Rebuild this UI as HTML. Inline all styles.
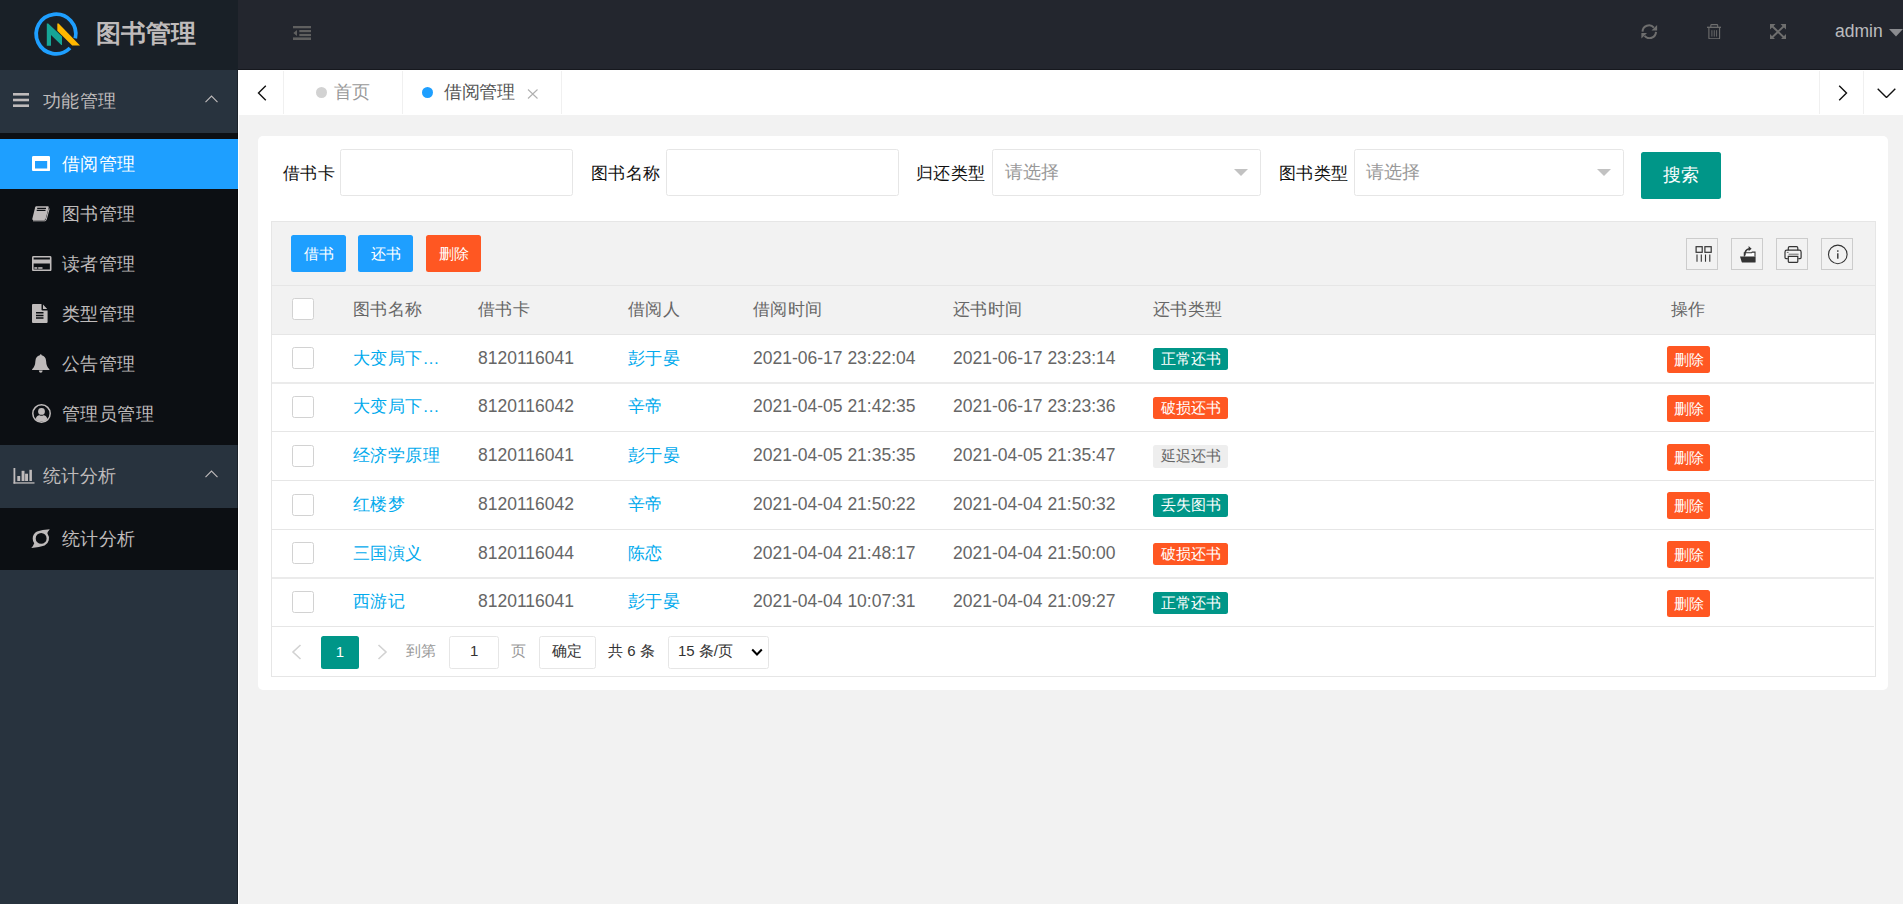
<!DOCTYPE html>
<html>
<head>
<meta charset="utf-8">
<style>
*{box-sizing:border-box;margin:0;padding:0}
html,body{width:1903px;height:904px;overflow:hidden}
body{position:relative;background:#f2f2f2;font-family:"Liberation Sans",sans-serif;color:#333}
.abs{position:absolute}
svg{display:block}
/* header */
#logo{left:0;top:0;width:238px;height:70px;background:#192027}
#logo .t{left:96px;top:17px;font-size:25px;font-weight:bold;color:#bfbbbb;line-height:32px;white-space:nowrap}
#hdr{left:238px;top:0;width:1665px;height:70px;background:#23262e;border-bottom:1px solid #16181e}
#hdr .admin{left:1597px;top:19px;font-size:17.5px;color:rgba(255,255,255,.7);line-height:24px}
/* sidebar */
#side{left:0;top:70px;width:238px;height:834px;background:#28333e}
.grp{position:absolute;left:0;width:238px;height:63px;background:#28333e;color:#bfbbbb;font-size:18px;letter-spacing:.45px}
.grp .t{position:absolute;left:43px;top:19px;line-height:24px;white-space:nowrap}
.child{position:absolute;left:0;width:238px;background:#0c0f13}
.item{position:absolute;left:0;width:238px;height:50px;color:#bfbbbb;font-size:18px;letter-spacing:.45px}
.item .t{position:absolute;left:62px;top:13px;line-height:24px;white-space:nowrap}
.item.on{background:#1e9fff;color:#fff}
.item .ic{position:absolute;left:32px}
#wline{left:238px;top:70px;width:1px;height:834px;background:#fff}
/* tabs */
#tabs{left:239px;top:70px;width:1664px;height:45px;background:#fff}
.vsep{position:absolute;top:1px;width:1px;height:43px;background:#f0f0f0}
.tab{position:absolute;top:0;height:45px;font-size:18px;letter-spacing:-.35px;line-height:44px;white-space:nowrap}
.dot{position:absolute;width:11px;height:11px;border-radius:50%}
/* card */
#card{left:258px;top:136px;width:1630px;height:554px;background:#fff;border-radius:5px}
.lbl{position:absolute;top:161.5px;font-size:17px;letter-spacing:.4px;line-height:24px;color:#111;white-space:nowrap}
.inp{position:absolute;top:149px;height:47px;background:#fff;border:1px solid #e6e6e6;border-radius:2.5px}
.ph{position:absolute;font-size:17.5px;color:#999;line-height:24px;white-space:nowrap}
.tri{position:absolute;width:0;height:0;border-left:7.5px solid transparent;border-right:7.5px solid transparent;border-top:7.5px solid #c2c2c2}
.btn{position:absolute;color:#fff;text-align:center;white-space:nowrap}
/* table */
#tbl{left:271px;top:221px;width:1605px;height:456px;border:1px solid #e6e6e6;background:#fff}
.tool{position:absolute;left:0;top:0;width:1603px;height:64px;background:#f2f2f2;border-bottom:1px solid #e6e6e6}
.thead{position:absolute;left:0;top:64px;width:1603px;height:49px;background:#f2f2f2;border-bottom:1px solid #e6e6e6}
.row{position:absolute;left:0;width:1603px;border-bottom:1px solid #e6e6e6}
.cell{position:absolute;font-size:17.5px;line-height:24px;color:#666;white-space:nowrap}
.link{color:#01aaed}
.cb{position:absolute;left:21px;width:22px;height:22px;border:1px solid #d2d2d2;border-radius:2.5px;background:#fff}
.badge{position:absolute;left:881px;height:22.5px;padding:0 7.5px;font-size:15px;line-height:22.5px;color:#fff;border-radius:2.5px;white-space:nowrap}
.del{position:absolute;left:1395px;width:43px;height:27px;background:#ff5722;color:#fff;font-size:15px;line-height:27px;text-align:center;border-radius:2.5px}
.tic{position:absolute;top:16px;width:32px;height:32px;border:1px solid #ccc}
</style>
</head>
<body>
<!-- logo -->
<div id="logo" class="abs">
  <svg class="abs" style="left:30px;top:8px" width="52" height="52" viewBox="0 0 52 52">
    <path d="M45.3 30.4 A19.8 19.8 0 1 0 40 40" fill="none" stroke="#1e9fff" stroke-width="3.8"/>
    <path d="M16.8 15.4 L18.2 15.4 L32 28.5 L32 37 L31.3 37 L21 26.9 L21 37.7 L16.8 37.7 Z" fill="#16a596"/>
    <path d="M27.3 15.4 L28.6 15.4 L50 37.4 L42.2 37.4 L27.3 22.8 Z" fill="#ffb800"/>
  </svg>
  <div class="abs t">图书管理</div>
</div>
<!-- header -->
<div id="hdr" class="abs">
  <div class="abs admin">admin</div>
</div>
<!-- sidebar -->
<div id="side" class="abs">
  <div class="grp" style="top:0">
    <div class="t">功能管理</div>
  </div>
  <div class="child" style="top:63px;height:312px">
    <div class="item on" style="top:6px"><div class="t">借阅管理</div></div>
    <div class="item" style="top:56px"><div class="t">图书管理</div></div>
    <div class="item" style="top:106px"><div class="t">读者管理</div></div>
    <div class="item" style="top:156px"><div class="t">类型管理</div></div>
    <div class="item" style="top:206px"><div class="t">公告管理</div></div>
    <div class="item" style="top:256px"><div class="t">管理员管理</div></div>
  </div>
  <div class="grp" style="top:375px">
    <div class="t">统计分析</div>
  </div>
  <div class="child" style="top:438px;height:62px">
    <div class="item" style="top:6px"><div class="t">统计分析</div></div>
  </div>
</div>
<div id="wline" class="abs"></div>
<div class="abs" style="left:237px;top:70px;width:1px;height:69px;background:rgba(0,0,0,.3)"></div>
<div class="abs" style="left:237px;top:189px;width:1px;height:715px;background:rgba(0,0,0,.3)"></div>
<!-- tabs -->
<div id="tabs" class="abs">
  <div class="vsep" style="left:44px"></div>
  <div class="vsep" style="left:163px"></div>
  <div class="vsep" style="left:322px"></div>
  <div class="vsep" style="left:1580px"></div>
  <div class="vsep" style="left:1624px"></div>
  <div class="dot" style="left:77px;top:17px;background:#d2d2d2"></div>
  <div class="tab" style="left:95px;color:#999">首页</div>
  <div class="dot" style="left:183px;top:17px;background:#1e9fff"></div>
  <div class="tab" style="left:205px;color:#555">借阅管理</div>
</div>

<!-- header icons -->
<svg class="abs" style="left:293px;top:25px" width="18" height="15" viewBox="0 0 18 15" fill="#5f5f5f">
  <rect x="0" y="1" width="18" height="2.3"/><rect x="6.3" y="5" width="11.7" height="2.2"/><rect x="6.3" y="8.9" width="11.7" height="2.2"/><rect x="0" y="12.4" width="18" height="2.6"/>
  <path d="M4 4.9 L4 11.1 L0.3 8 Z"/>
</svg>
<svg class="abs" style="left:1641px;top:23.5px" width="16.5" height="15.5" viewBox="0 0 16.5 15.5" fill="#6e6e6e">
  <path d="M1.5 7.6 A6.5 6.5 0 0 1 12.9 3.6" fill="none" stroke="#6e6e6e" stroke-width="2"/>
  <path d="M16.1 1 L16.1 6.6 L10.5 6.6 Z"/>
  <path d="M15 7.9 A6.5 6.5 0 0 1 3.6 11.9" fill="none" stroke="#6e6e6e" stroke-width="2"/>
  <path d="M0.4 14.5 L0.4 8.9 L6 8.9 Z"/>
</svg>
<svg class="abs" style="left:1706.5px;top:23.5px" width="14.5" height="15.5" viewBox="0 0 14.5 15.5" fill="none" stroke="#6e6e6e">
  <path d="M3.8 3.2 V1.4 Q3.8 0.6 4.6 0.6 H9.9 Q10.7 0.6 10.7 1.4 V3.2" stroke-width="1.1"/>
  <path d="M0 3.3 H14.5" stroke-width="1.3"/>
  <path d="M1.9 3.5 V13.9 Q1.9 14.9 2.9 14.9 H11.6 Q12.6 14.9 12.6 13.9 V3.5" stroke-width="1.1"/>
  <path d="M4.9 6.2 V12.6 M7.25 6.2 V12.6 M9.6 6.2 V12.6" stroke-width="0.9"/>
</svg>
<svg class="abs" style="left:1770px;top:23.5px" width="16" height="15.5" viewBox="0 0 16 15.5" fill="#6e6e6e">
  <path d="M0 0 H5.5 L0 5.5 Z M16 0 V5.5 L10.5 0 Z M0 15.5 V10 L5.5 15.5 Z M16 15.5 H10.5 L16 10 Z"/>
  <path d="M2 2 L14 13.5 M14 2 L2 13.5" stroke="#6e6e6e" stroke-width="1.9"/>
</svg>
<svg class="abs" style="left:1889px;top:29px" width="14" height="8" viewBox="0 0 14 8"><path d="M0 0 H14 L7 7.5 Z" fill="#8a8b8f"/></svg>

<!-- sidebar icons -->
<svg class="abs" style="left:13px;top:93px" width="16" height="14" viewBox="0 0 16 14" fill="#bfbbbb"><rect y="0" width="16" height="2.6"/><rect y="5.7" width="16" height="2.6"/><rect y="11.4" width="16" height="2.6"/></svg>
<svg class="abs" style="left:205px;top:470px" width="13" height="8" viewBox="0 0 13 8"><path d="M0.5 7.2 L6.5 1 L12.5 7.2" fill="none" stroke="#bfbbbb" stroke-width="1.1"/></svg>
<svg class="abs" style="left:205px;top:95px" width="13" height="8" viewBox="0 0 13 8"><path d="M0.5 7.2 L6.5 1 L12.5 7.2" fill="none" stroke="#bfbbbb" stroke-width="1.1"/></svg>
<svg class="abs" style="left:32px;top:156px" width="18.2" height="15.2" viewBox="0 0 18.2 15.2"><path fill="#fff" fill-rule="evenodd" d="M1.5 0 H16.7 Q18.2 0 18.2 1.5 V13.7 Q18.2 15.2 16.7 15.2 H1.5 Q0 15.2 0 13.7 V1.5 Q0 0 1.5 0 Z M3 5 V12.6 H15.2 V5 Z"/></svg>
<svg class="abs" style="left:32px;top:206px" width="17.5" height="15.5" viewBox="0 0 17.5 15.5"><path fill="#bfbbbb" d="M4.2 0.3 H15.8 Q17 0.3 16.7 1.5 L13.6 13 Q13.3 14 12.2 14 H1.2 Q0 14 0.3 12.8 L3.2 1.3 Q3.5 0.3 4.2 0.3 Z"/><path d="M5.2 2.3 H14 M4.7 4.4 H13.5" stroke="#0c0f13" stroke-width="1.2"/><path d="M1 14.8 H12.8 Q13.9 14.8 14.2 13.8 L17.2 2.6" fill="none" stroke="#bfbbbb" stroke-width="1"/></svg>
<svg class="abs" style="left:32px;top:256px" width="19.5" height="15.2" viewBox="0 0 19.5 15.2"><path fill="#bfbbbb" fill-rule="evenodd" d="M1.5 0 H18 Q19.5 0 19.5 1.5 V13.7 Q19.5 15.2 18 15.2 H1.5 Q0 15.2 0 13.7 V1.5 Q0 0 1.5 0 Z M1.6 1.6 V3.6 H17.9 V1.6 Z M1.6 7.6 V13.6 H17.9 V7.6 Z"/><rect x="2.3" y="11.2" width="3" height="1.6" fill="#bfbbbb"/><rect x="6.2" y="11.2" width="4.3" height="1.6" fill="#bfbbbb"/></svg>
<svg class="abs" style="left:32px;top:304px" width="15.6" height="19" viewBox="0 0 15.6 19"><path fill="#bfbbbb" d="M1 0 H9.5 V5.5 Q9.5 6.5 10.5 6.5 H15.6 V18 Q15.6 19 14.6 19 H1 Q0 19 0 18 V1 Q0 0 1 0 Z M11 0.5 L15.2 5 H11 Z"/><path d="M4 8.8 H11.5 M4 11.5 H11.5 M4 14 H11.5" stroke="#0c0f13" stroke-width="1.5"/></svg>
<svg class="abs" style="left:32px;top:354px" width="17.5" height="19" viewBox="0 0 17.5 19"><path fill="#bfbbbb" d="M8.75 0.3 Q9.6 0.3 9.7 1.3 Q13.8 2.2 14.1 7 Q14.3 12.5 17.4 15.2 V15.9 H0.1 V15.2 Q3.2 12.5 3.4 7 Q3.7 2.2 7.8 1.3 Q7.9 0.3 8.75 0.3 Z M6.8 16.6 H10.7 Q10.4 18.8 8.75 18.8 Q7.1 18.8 6.8 16.6 Z"/></svg>
<svg class="abs" style="left:31.5px;top:403.7px" width="19" height="19" viewBox="0 0 19 19"><circle cx="9.5" cy="9.5" r="8.7" fill="none" stroke="#bfbbbb" stroke-width="1.5"/><circle cx="9.5" cy="7.4" r="3.4" fill="#bfbbbb"/><path fill="#bfbbbb" d="M3.6 15.2 Q4.5 11.4 7.6 11.2 Q9.5 12.2 11.4 11.2 Q14.5 11.4 15.4 15.2 Q12.9 17.6 9.5 17.6 Q6.1 17.6 3.6 15.2 Z"/></svg>
<svg class="abs" style="left:12.5px;top:467.5px" width="22" height="16" viewBox="0 0 22 16" fill="#bfbbbb"><rect x="0.5" y="0" width="1.8" height="15.6"/><rect x="0.5" y="14.3" width="21" height="1.3"/><rect x="4.3" y="8" width="2.9" height="5"/><rect x="8.6" y="2.8" width="2.9" height="10.2"/><rect x="12.1" y="5.7" width="2.9" height="7.3"/><rect x="16.4" y="1.8" width="2.5" height="11.2"/></svg>
<svg class="abs" style="left:28px;top:524px" width="26" height="28" viewBox="0 0 26 28"><path fill="#bfbbbb" fill-rule="evenodd" d="M4.7 14.5 A8.1 8.1 0 0 1 9 7.4 Q14 5.6 21.8 5.2 Q19.6 7.5 19.4 9.6 A8.1 8.1 0 0 1 16.6 21.6 Q11.6 23.4 3.3 23.9 Q5.6 21.5 6.2 19.3 A8.1 8.1 0 0 1 4.7 14.5 Z M7.7 14.4 A5.45 5.45 0 1 0 18.6 14.4 A5.45 5.45 0 1 0 7.7 14.4 Z"/></svg>

<!-- tab icons -->
<svg class="abs" style="left:256.5px;top:84.5px" width="10" height="16" viewBox="0 0 10 16"><path d="M8.8 0.8 L1.5 8 L8.8 15.2" fill="none" stroke="#111" stroke-width="1.4"/></svg>
<svg class="abs" style="left:1837.5px;top:84.5px" width="10" height="16" viewBox="0 0 10 16"><path d="M1.2 0.8 L8.5 8 L1.2 15.2" fill="none" stroke="#111" stroke-width="1.4"/></svg>
<svg class="abs" style="left:1877px;top:87.5px" width="19" height="10.5" viewBox="0 0 19 10.5"><path d="M0.7 0.8 L9.5 9.5 L18.3 0.8" fill="none" stroke="#111" stroke-width="1.4"/></svg>
<svg class="abs" style="left:527px;top:88.5px" width="11.5" height="10" viewBox="0 0 11.5 10"><path d="M1 0.5 L10.5 9.5 M10.5 0.5 L1 9.5" fill="none" stroke="#b0b0b0" stroke-width="1.1"/></svg>
<!-- card -->
<div id="card" class="abs"></div>
<div class="lbl" style="left:283px">借书卡</div>
<div class="inp" style="left:340px;width:233px"></div>
<div class="lbl" style="left:591px">图书名称</div>
<div class="inp" style="left:666px;width:233px"></div>
<div class="lbl" style="left:916px">归还类型</div>
<div class="inp" style="left:991.5px;width:269px"></div>
<div class="ph" style="left:1005px;top:160px">请选择</div>
<div class="tri" style="left:1234px;top:169px"></div>
<div class="lbl" style="left:1279px">图书类型</div>
<div class="inp" style="left:1354px;width:270px"></div>
<div class="ph" style="left:1366px;top:160px">请选择</div>
<div class="tri" style="left:1597px;top:169px"></div>
<div class="btn" style="left:1641px;top:152px;width:80px;height:47px;background:#009688;border-radius:2.5px;font-size:17.5px;line-height:47px">搜索</div>
<!-- table -->
<div id="tbl" class="abs"></div>
<div class="abs" style="left:272px;top:222px;width:1603px;height:63px;background:#f2f2f2"></div>
<div class="abs" style="left:272px;top:285px;width:1603px;height:1px;background:#e6e6e6"></div>
<div class="abs" style="left:272px;top:286px;width:1603px;height:48px;background:#f2f2f2"></div>
<div class="abs" style="left:272px;top:334px;width:1603px;height:1px;background:#e6e6e6"></div>
<div class="btn" style="left:291px;top:235px;width:55px;height:37px;background:#1e9fff;border-radius:2.5px;font-size:15px;line-height:37px">借书</div>
<div class="btn" style="left:358px;top:235px;width:55px;height:37px;background:#1e9fff;border-radius:2.5px;font-size:15px;line-height:37px">还书</div>
<div class="btn" style="left:426px;top:235px;width:55px;height:37px;background:#ff5722;border-radius:2.5px;font-size:15px;line-height:37px">删除</div>
<div class="tic" style="left:1686px;top:238px"></div>
<div class="tic" style="left:1731px;top:238px"></div>
<div class="tic" style="left:1776px;top:238px"></div>
<div class="tic" style="left:1821px;top:238px"></div>
<svg class="abs" style="left:1686px;top:238px" width="32" height="32" viewBox="0 0 32 32" fill="none" stroke="#333">
  <rect x="10.1" y="8.7" width="6.1" height="5.6" stroke-width="1.2"/><rect x="18.9" y="8.7" width="6.3" height="5.6" stroke-width="1.2"/>
  <path d="M11 16.5 V23.8 M15.3 16.5 V23.8 M19.5 16.5 V23.8 M23.8 16.5 V23.8" stroke-width="1.1"/>
</svg>
<svg class="abs" style="left:1731px;top:238px" width="32" height="32" viewBox="0 0 32 32">
  <path d="M13.3 18.5 V14.8 H20.6 L21.2 14.1 H24 V18.5" fill="#fff" stroke="#333" stroke-width="1.1"/>
  <path fill="#333" d="M9 18.5 H24.6 V23.9 Q24.6 24.6 23.9 24.6 H11.6 Q10.9 24.6 10.7 23.9 Z"/>
  <path d="M13.8 17.6 Q13.6 11.2 18.6 10.8" fill="none" stroke="#333" stroke-width="1.6"/>
  <path fill="#333" d="M17.6 8 L20.6 10.8 L17.6 13.3 Z"/>
</svg>
<svg class="abs" style="left:1776px;top:238px" width="32" height="32" viewBox="0 0 32 32" fill="none" stroke="#333">
  <path d="M12.3 12.2 V10 Q12.3 8.7 13.6 8.7 H20.5 Q21.8 8.7 21.8 10 V12.2" stroke-width="1.2"/>
  <path d="M11.8 20.6 H10 Q9 20.6 9 19.6 V14 Q9 12.2 10.8 12.2 H23.3 Q25.1 12.2 25.1 14 V19.6 Q25.1 20.6 24.1 20.6 H22.3" stroke-width="1.2"/>
  <path d="M12.3 18.3 H21.8 V23.6 Q21.8 24.3 21.1 24.3 H13 Q12.3 24.3 12.3 23.6 Z" stroke-width="1.2"/>
  <path d="M10.8 14.4 H12.6 M12.6 16.2 H22.6" stroke-width="0.7"/>
</svg>
<svg class="abs" style="left:1821px;top:238px" width="32" height="32" viewBox="0 0 32 32">
  <circle cx="16.8" cy="16.4" r="9.3" fill="none" stroke="#333" stroke-width="1.1"/>
  <rect x="16.1" y="12.3" width="1.4" height="1.5" fill="#333"/><rect x="16.1" y="15.3" width="1.4" height="5.4" fill="#333"/>
</svg>
<div class="cb" style="left:292px;top:298px"></div>
<div class="cell" style="left:353px;top:297.5px;font-size:17px;letter-spacing:.4px">图书名称</div>
<div class="cell" style="left:478px;top:297.5px;font-size:17px;letter-spacing:.4px">借书卡</div>
<div class="cell" style="left:628px;top:297.5px;font-size:17px;letter-spacing:.4px">借阅人</div>
<div class="cell" style="left:753px;top:297.5px;font-size:17px;letter-spacing:.4px">借阅时间</div>
<div class="cell" style="left:953px;top:297.5px;font-size:17px;letter-spacing:.4px">还书时间</div>
<div class="cell" style="left:1153px;top:297.5px;font-size:17px;letter-spacing:.4px">还书类型</div>
<div class="cell" style="left:1671px;top:297.5px;font-size:17px;letter-spacing:.4px">操作</div>
<div class="cb" style="left:292px;top:347.4px"></div>
<div class="cell link" style="left:353px;top:346.5px;font-size:17px;letter-spacing:.4px">大变局下…</div>
<div class="cell" style="left:478px;top:345.5px">8120116041</div>
<div class="cell link" style="left:628px;top:346.5px;font-size:17px;letter-spacing:.4px">彭于晏</div>
<div class="cell" style="left:753px;top:345.5px">2021-06-17 23:22:04</div>
<div class="cell" style="left:953px;top:345.5px">2021-06-17 23:23:14</div>
<div class="badge" style="left:1153px;top:347.8px;background:#009688;color:#fff">正常还书</div>
<div class="del" style="left:1667px;top:346.1px">删除</div>
<div class="cb" style="left:292px;top:396.1px"></div>
<div class="cell link" style="left:353px;top:395.2px;font-size:17px;letter-spacing:.4px">大变局下…</div>
<div class="cell" style="left:478px;top:394.2px">8120116042</div>
<div class="cell link" style="left:628px;top:395.2px;font-size:17px;letter-spacing:.4px">辛帝</div>
<div class="cell" style="left:753px;top:394.2px">2021-04-05 21:42:35</div>
<div class="cell" style="left:953px;top:394.2px">2021-06-17 23:23:36</div>
<div class="badge" style="left:1153px;top:396.5px;background:#ff5722;color:#fff">破损还书</div>
<div class="del" style="left:1667px;top:394.8px">删除</div>
<div class="cb" style="left:292px;top:444.9px"></div>
<div class="cell link" style="left:353px;top:444.0px;font-size:17px;letter-spacing:.4px">经济学原理</div>
<div class="cell" style="left:478px;top:443.0px">8120116041</div>
<div class="cell link" style="left:628px;top:444.0px;font-size:17px;letter-spacing:.4px">彭于晏</div>
<div class="cell" style="left:753px;top:443.0px">2021-04-05 21:35:35</div>
<div class="cell" style="left:953px;top:443.0px">2021-04-05 21:35:47</div>
<div class="badge" style="left:1153px;top:445.3px;background:#eeeeee;color:#666">延迟还书</div>
<div class="del" style="left:1667px;top:443.6px">删除</div>
<div class="cb" style="left:292px;top:493.6px"></div>
<div class="cell link" style="left:353px;top:492.7px;font-size:17px;letter-spacing:.4px">红楼梦</div>
<div class="cell" style="left:478px;top:491.7px">8120116042</div>
<div class="cell link" style="left:628px;top:492.7px;font-size:17px;letter-spacing:.4px">辛帝</div>
<div class="cell" style="left:753px;top:491.7px">2021-04-04 21:50:22</div>
<div class="cell" style="left:953px;top:491.7px">2021-04-04 21:50:32</div>
<div class="badge" style="left:1153px;top:494.0px;background:#009688;color:#fff">丢失图书</div>
<div class="del" style="left:1667px;top:492.3px">删除</div>
<div class="cb" style="left:292px;top:542.4px"></div>
<div class="cell link" style="left:353px;top:541.5px;font-size:17px;letter-spacing:.4px">三国演义</div>
<div class="cell" style="left:478px;top:540.5px">8120116044</div>
<div class="cell link" style="left:628px;top:541.5px;font-size:17px;letter-spacing:.4px">陈恋</div>
<div class="cell" style="left:753px;top:540.5px">2021-04-04 21:48:17</div>
<div class="cell" style="left:953px;top:540.5px">2021-04-04 21:50:00</div>
<div class="badge" style="left:1153px;top:542.8px;background:#ff5722;color:#fff">破损还书</div>
<div class="del" style="left:1667px;top:541.1px">删除</div>
<div class="cb" style="left:292px;top:591.1px"></div>
<div class="cell link" style="left:353px;top:590.2px;font-size:17px;letter-spacing:.4px">西游记</div>
<div class="cell" style="left:478px;top:589.2px">8120116041</div>
<div class="cell link" style="left:628px;top:590.2px;font-size:17px;letter-spacing:.4px">彭于晏</div>
<div class="cell" style="left:753px;top:589.2px">2021-04-04 10:07:31</div>
<div class="cell" style="left:953px;top:589.2px">2021-04-04 21:09:27</div>
<div class="badge" style="left:1153px;top:591.5px;background:#009688;color:#fff">正常还书</div>
<div class="del" style="left:1667px;top:589.8px">删除</div>
<div class="abs" style="left:272px;top:382px;width:1602px;height:2px;background:#ebebeb"></div>
<div class="abs" style="left:272px;top:431px;width:1602px;height:1px;background:#e6e6e6"></div>
<div class="abs" style="left:272px;top:480px;width:1602px;height:1px;background:#e6e6e6"></div>
<div class="abs" style="left:272px;top:529px;width:1602px;height:1px;background:#e6e6e6"></div>
<div class="abs" style="left:272px;top:577px;width:1602px;height:2px;background:#ebebeb"></div>
<div class="abs" style="left:272px;top:626px;width:1602px;height:1px;background:#e6e6e6"></div>
<!-- pagination -->
<svg class="abs" style="left:291px;top:643.5px" width="11" height="16" viewBox="0 0 11 16"><path d="M9.5 1 L2 8 L9.5 15" fill="none" stroke="#d2d2d2" stroke-width="1.6"/></svg>
<div class="btn" style="left:321px;top:636px;width:38px;height:33px;background:#009688;border-radius:2.5px;font-size:15px;line-height:31px">1</div>
<svg class="abs" style="left:377px;top:643.5px" width="11" height="16" viewBox="0 0 11 16"><path d="M1.5 1 L9 8 L1.5 15" fill="none" stroke="#d2d2d2" stroke-width="1.6"/></svg>
<div class="cell" style="left:406px;top:639px;font-size:15px;color:#999">到第</div>
<div class="abs" style="left:449px;top:636px;width:50px;height:33px;border:1px solid #e6e6e6;border-radius:2.5px;background:#fff"></div>
<div class="cell" style="left:470px;top:639px;font-size:15px;color:#333">1</div>
<div class="cell" style="left:511px;top:639px;font-size:15px;color:#999">页</div>
<div class="abs" style="left:539px;top:636px;width:57px;height:33px;border:1px solid #e6e6e6;border-radius:2.5px;background:#fff"></div>
<div class="cell" style="left:552px;top:639px;font-size:15px;color:#333">确定</div>
<div class="cell" style="left:608px;top:639px;font-size:15px;color:#333;word-spacing:0">共 6 条</div>
<div class="abs" style="left:668px;top:636px;width:101px;height:33px;border:1px solid #e6e6e6;border-radius:2.5px;background:#fff"></div>
<div class="cell" style="left:678px;top:639px;font-size:15px;color:#333">15 条/页</div>
<svg class="abs" style="left:751px;top:648px" width="12" height="9" viewBox="0 0 12 9"><path d="M1.2 1.5 L6 6.5 L10.8 1.5" fill="none" stroke="#000" stroke-width="2"/></svg>
</body>
</html>
